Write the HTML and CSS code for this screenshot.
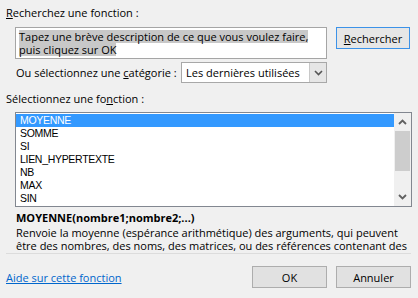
FILE: index.html
```html
<!DOCTYPE html>
<html lang="fr">
<head>
  <meta charset="UTF-8" />
  <title>Insérer une fonction</title>
  <link rel="stylesheet" href="styles.css">
</head>
<body>
  <div class="dialog">
    <div class="label"><u>R</u>echerchez une fonction :</div>
    <div class="search-row">
      <div class="search-box">
        <span class="sel">Tapez une brève description de ce que vous voulez faire,</span><br>
        <span class="sel">puis cliquez sur OK</span>
      </div>
      <button class="btn focus"><u>R</u>echercher</button>
    </div>
    <div class="cat-row">
      <span class="cat-label">Ou sélectionnez une <u>c</u>atégorie :</span>
      <div class="select">
        <span class="select-text">Les dernières utilisées</span>
        <span class="select-arrow">
          <svg width="9" height="6" viewBox="0 0 9 6"><path d="M1 1 L4.5 4.5 L8 1" fill="none" stroke="#555" stroke-width="1.6"/></svg>
        </span>
      </div>
    </div>
    <div class="label list-label">Sélectionnez une fo<u>n</u>ction :</div>
    <div class="listbox">
      <ul class="items">
        <li class="active">MOYENNE</li>
        <li>SOMME</li>
        <li>SI</li>
        <li>LIEN_HYPERTEXTE</li>
        <li>NB</li>
        <li>MAX</li>
        <li>SIN</li>
      </ul>
      <div class="scrollbar">
        <span class="arrow">
          <svg width="9" height="6" viewBox="0 0 9 6"><path d="M1 5 L4.5 1.5 L8 5" fill="none" stroke="#606060" stroke-width="1.8"/></svg>
        </span>
        <div class="track"><div class="thumb"></div></div>
        <span class="arrow">
          <svg width="9" height="6" viewBox="0 0 9 6"><path d="M1 1 L4.5 4.5 L8 1" fill="none" stroke="#606060" stroke-width="1.8"/></svg>
        </span>
      </div>
    </div>
    <div class="signature">MOYENNE(nombre1;nombre2;...)</div>
    <div class="desc">Renvoie la moyenne (espérance arithmétique) des arguments, qui peuvent<br>être des nombres, des noms, des matrices, ou des références contenant des</div>
    <div class="footer">
      <a class="help" href="#">Aide sur cette fonction</a>
      <div class="actions">
        <button class="btn">OK</button>
        <button class="btn">Annuler</button>
      </div>
    </div>
  </div>
</body>
</html>
```

FILE: styles.css
```css
* {
  box-sizing: border-box;
}
body {
  margin: 0;
  background: #f0f0f0;
  font-family: 'Open Sans', 'Noto Sans', sans-serif;
  font-size: 11px;
  color: #000;
}
.dialog {
  width: 418px;
  height: 298px;
  padding: 5px 7px 0 6px;
  overflow: hidden;
}
u {
  text-decoration: underline;
  text-underline-offset: 1px;
}
.label {
  line-height: 16px;
  height: 16px;
}
.search-row {
  display: flex;
  gap: 9px;
  margin-top: 6px;
  margin-left: 9px;
}
.search-box {
  width: 312px;
  height: 32px;
  background: #fff;
  border: 1px solid #a5a5a5;
  padding: 2px 3px;
  line-height: 13px;
}
.sel {
  display: inline-block;
  height: 13px;
  line-height: 13px;
  background: #c8c8c8;
}
.btn {
  width: 74px;
  height: 22px;
  margin: 0;
  padding: 0;
  background: #e1e1e1;
  border: 1px solid #adadad;
  font-family: inherit;
  font-size: 11px;
  color: #000;
}
.btn.focus {
  border-color: #3c92e8;
  background: #e6e6e6;
}
.cat-row {
  display: flex;
  align-items: center;
  margin-top: 3px;
  margin-left: 10px;
}
.cat-label {
  width: 165px;
  white-space: nowrap;
}
.select {
  width: 146px;
  height: 21px;
  display: flex;
  background: #fff;
  border: 1px solid #a8a8a8;
}
.select-text {
  flex: 1;
  padding-left: 4px;
  line-height: 19px;
}
.select-arrow {
  width: 17px;
  background: #e6e6e6;
  border-left: 1px solid #c8c8c8;
  display: flex;
  align-items: center;
  justify-content: center;
}
.list-label {
  margin-top: 8px;
}
.listbox {
  display: flex;
  width: 397px;
  height: 95px;
  margin-top: 5px;
  margin-left: 9px;
  background: #fff;
  border: 1px solid #828790;
}
.items {
  flex: 1;
  list-style: none;
  margin: 0;
  padding: 1px 0 0 0;
  font-family: 'Liberation Sans', Arial, sans-serif;
  font-size: 10.5px;
  letter-spacing: -0.3px;
}
.items li {
  height: 13px;
  line-height: 13px;
  padding-left: 4px;
}
.items li.active {
  background: #3399ff;
  color: #fff;
}
.scrollbar {
  width: 17px;
  display: flex;
  flex-direction: column;
  background: #f0f0f0;
}
.arrow {
  height: 18px;
  display: flex;
  align-items: center;
  justify-content: center;
}
.track {
  flex: 1;
}
.thumb {
  margin: 0 1px;
  height: 40px;
  background: #cdcdcd;
}
.signature {
  margin-top: 3px;
  margin-left: 10px;
  font-weight: bold;
  line-height: 16px;
}
.desc {
  margin-left: 10px;
  height: 27px;
  line-height: 13px;
  white-space: nowrap;
  overflow: hidden;
}
.footer {
  display: flex;
  justify-content: space-between;
  align-items: center;
  border-top: 1px solid #dcdcdc;
  padding-top: 12px;
}
.help {
  color: #0066cc;
  text-decoration: underline;
}
.actions {
  display: flex;
  gap: 9px;
}
.actions .btn {
  width: 75px;
}
```
